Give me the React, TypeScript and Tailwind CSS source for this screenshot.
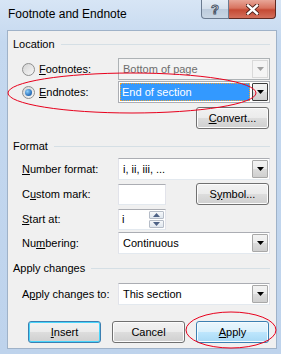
import React from "react";

const U = ({ children }: { children: React.ReactNode }) => (
  <span className="underline underline-offset-[1px]">{children}</span>
);

const Tri = ({ color = "#000" }: { color?: string }) => (
  <svg width="7" height="4" viewBox="0 0 7 4">
    <polygon points="0,0 7,0 3.5,4" fill={color} />
  </svg>
);

const DropBtn = ({ dark = false }: { dark?: boolean }) => (
  <div
    className={`w-[16px] m-[1px] flex items-center justify-center border rounded-[1px] bg-[linear-gradient(#f3f3f3_0%,#ebebeb_50%,#dcdcdc_51%,#cfcfcf_100%)] ${
      dark ? "border-[#3c3c3c]" : "border-[#a8a8a8]"
    }`}
  >
    <Tri />
  </div>
);

const Combo = ({ text }: { text: string }) => (
  <div className="w-[152px] h-[22px] flex border border-[#abadb3] border-l-[#e2e3ea] border-r-[#e2e3ea] border-b-[#e3e9ef] bg-white">
    <div className="flex-1 flex items-center pl-[4px] text-black">{text}</div>
    <DropBtn />
  </div>
);

const Btn = ({
  children,
  variant = "normal",
}: {
  children: React.ReactNode;
  variant?: "normal" | "default" | "hover";
}) => {
  const cls =
    variant === "hover"
      ? "border-[#3c7fb1] bg-[linear-gradient(#eaf6fd_0%,#d9f0fc_50%,#bee6fd_51%,#a7d9f5_100%)] shadow-[inset_0_0_0_1px_#f4fbfe]"
      : variant === "default"
      ? "border-[#3c7fb1] bg-[linear-gradient(#f2f2f2_0%,#ebebeb_50%,#dddddd_51%,#cfcfcf_100%)] shadow-[inset_0_0_0_1px_#48d5fb]"
      : "border-[#707070] bg-[linear-gradient(#f2f2f2_0%,#ebebeb_50%,#dddddd_51%,#cfcfcf_100%)] shadow-[inset_0_0_0_1px_#fcfcfc]";
  return (
    <div
      className={`w-[73px] h-[22px] rounded-[3px] border flex items-center justify-center text-black ${cls}`}
    >
      {children}
    </div>
  );
};

const Header = ({ label }: { label: string }) => (
  <div className="flex items-center h-[16px] pl-[5px] pr-[6px]">
    <span className="text-black">{label}</span>
    <div className="ml-[6px] flex-1 h-px bg-[#d5dfe5]" />
  </div>
);

const Radio = ({ checked }: { checked?: boolean }) => (
  <div className="w-[13px] h-[13px] rounded-full border border-[#8e8f8f] bg-[linear-gradient(135deg,#d4d4d4,#f7f7f7)] flex items-center justify-center">
    {checked && (
      <div className="w-[7px] h-[7px] rounded-full bg-[radial-gradient(circle_at_35%_35%,#8fd0fb,#2f76c0_60%,#1a4f8a)]" />
    )}
  </div>
);

export default function App() {
  return (
    <div className="relative w-[281px] h-[354px] overflow-hidden flex flex-col font-['Liberation_Sans',Arial,sans-serif] text-[11px] leading-none bg-[linear-gradient(#d7e5f5_0%,#c4d8ef_12%,#bed3ec_100%)]">
      {/* Title bar */}
      <div className="h-[30px] flex items-start shrink-0">
        <div className="pl-[8px] mt-[8px] text-[12px] text-black">Footnote and Endnote</div>
        <div className="ml-auto mr-[5px] flex">
          <div className="w-[28px] h-[19px] rounded-bl-[4px] border border-t-0 border-[#6b7b90] bg-[linear-gradient(#e4ecf5_0%,#d4dfeb_50%,#bccbdc_51%,#c9d6e4_100%)] flex items-center justify-center">
            <span className="text-[13px] font-bold text-white [-webkit-text-stroke:1px_#4a5668] leading-none">?</span>
          </div>
          <div className="w-[47px] h-[19px] rounded-br-[4px] border border-t-0 border-l-0 border-[#5f2a22] bg-[linear-gradient(#e8a698_0%,#d8735f_45%,#c54a34_55%,#d3705c_100%)] flex items-center justify-center">
            <svg width="13" height="11" viewBox="0 0 13 11">
              <path d="M2 1.5 L11 9.5 M11 1.5 L2 9.5" stroke="#4a1e17" strokeWidth="4.2" strokeLinecap="square" />
              <path d="M2 1.5 L11 9.5 M11 1.5 L2 9.5" stroke="#ffffff" strokeWidth="2.4" strokeLinecap="square" />
            </svg>
          </div>
        </div>
      </div>

      {/* Client area */}
      <div className="ml-[7px] mr-[4px] h-[319px] border border-[#9fb2c8] bg-[#f0f0f0] flex flex-col shrink-0">
        <div className="mt-[5px]">
          <Header label="Location" />
        </div>

        <div className="mt-[6px] flex items-center h-[22px]">
          <div className="w-[110px] flex items-center pl-[14px]">
            <Radio />
            <span className="ml-[4px]">
              <U>F</U>ootnotes:
            </span>
          </div>
          <div className="w-[152px] h-[22px] flex border border-[#adb2b5] bg-[#f4f4f4]">
            <div className="flex-1 flex items-center pl-[4px] text-[#6d6d6d]">Bottom of page</div>
            <div className="w-[16px] m-[1px] flex items-center justify-center border border-[#d9d9d9]">
              <Tri color="#a0a0a0" />
            </div>
          </div>
        </div>

        <div className="mt-[1px] flex items-center h-[22px]">
          <div className="w-[110px] flex items-center pl-[14px]">
            <Radio checked />
            <span className="ml-[4px]">
              <U>E</U>ndnotes:
            </span>
          </div>
          <div className="w-[152px] h-[22px] flex border border-[#abadb3] bg-white">
            <div className="flex-1 p-[1px] flex">
              <div className="flex-1 flex items-center pl-[2px] bg-[#3399ff] text-white outline-1 outline-dotted outline-[#f0a030] -outline-offset-1">
                End of section
              </div>
            </div>
            <DropBtn dark />
          </div>
        </div>

        <div className="mt-[4px] flex pl-[188px]">
          <Btn>
            <U>C</U>onvert...
          </Btn>
        </div>

        <div className="mt-[9px]">
          <Header label="Format" />
        </div>

        <div className="mt-[4px] flex items-center h-[22px]">
          <div className="w-[110px] pl-[14px]">
            <U>N</U>umber format:
          </div>
          <Combo text="i, ii, iii, ..." />
        </div>

        <div className="mt-[3px] flex items-center h-[22px]">
          <div className="w-[110px] pl-[14px]">
            C<U>u</U>stom mark:
          </div>
          <div className="w-[48px] h-[21px] border border-[#abadb3] border-l-[#e2e3ea] border-r-[#e2e3ea] border-b-[#e3e9ef] bg-white" />
          <div className="ml-[30px]">
            <Btn>
              S<U>y</U>mbol...
            </Btn>
          </div>
        </div>

        <div className="mt-[4px] flex items-center h-[21px]">
          <div className="w-[110px] pl-[14px]">
            <U>S</U>tart at:
          </div>
          <div className="w-[48px] h-[21px] flex border border-[#abadb3] border-l-[#e2e3ea] border-r-[#e2e3ea] border-b-[#e3e9ef] bg-white">
            <div className="flex-1 flex items-center pl-[3px]">i</div>
            <div className="w-[17px] flex flex-col gap-px p-px">
              <div className="flex-1 flex items-center justify-center border border-[#b5bcc7] rounded-[1px] bg-[linear-gradient(#f6f8fa,#dfe6ee)]">
                <svg width="7" height="4" viewBox="0 0 7 4"><polygon points="0,4 7,4 3.5,0" fill="#4d6185" /></svg>
              </div>
              <div className="flex-1 flex items-center justify-center border border-[#b5bcc7] rounded-[1px] bg-[linear-gradient(#f6f8fa,#dfe6ee)]">
                <svg width="7" height="4" viewBox="0 0 7 4"><polygon points="0,0 7,0 3.5,4" fill="#4d6185" /></svg>
              </div>
            </div>
          </div>
        </div>

        <div className="mt-[2px] flex items-center h-[22px]">
          <div className="w-[110px] pl-[14px]">
            Nu<U>m</U>bering:
          </div>
          <Combo text="Continuous" />
        </div>

        <div className="mt-[6px]">
          <Header label="Apply changes" />
        </div>

        <div className="mt-[7px] flex items-center h-[22px]">
          <div className="w-[110px] pl-[14px]">
            A<U>p</U>ply changes to:
          </div>
          <Combo text="This section" />
        </div>

        <div className="mt-[16px] flex pl-[20px] gap-[11px]">
          <Btn variant="default">
            <U>I</U>nsert
          </Btn>
          <Btn>Cancel</Btn>
          <Btn variant="hover">
            <U>A</U>pply
          </Btn>
        </div>
      </div>

      {/* Hand-drawn red annotation ellipses */}
      <svg
        className="absolute left-0 top-0 pointer-events-none"
        width="281"
        height="354"
        viewBox="0 0 281 354"
      >
        <ellipse cx="132" cy="93" rx="124" ry="20" fill="none" stroke="#e8001c" strokeWidth="1" />
        <ellipse cx="231" cy="330" rx="45" ry="18" fill="none" stroke="#e8001c" strokeWidth="1" />
      </svg>
    </div>
  );
}
